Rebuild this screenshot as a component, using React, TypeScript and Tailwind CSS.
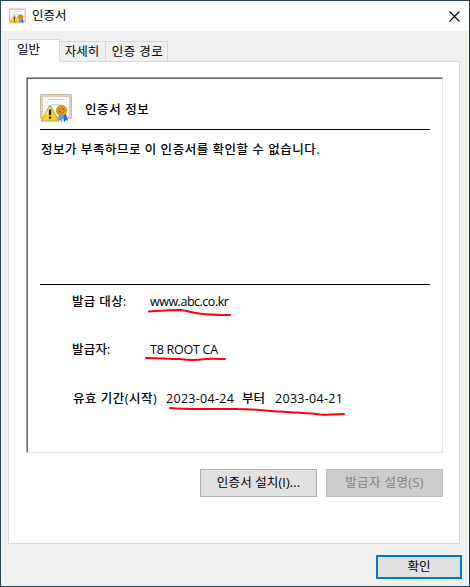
import clsx from "clsx";

const font = "font-['Open_Sans','Noto_Sans_CJK_KR',sans-serif]";

function CertificateIcon({ size }: { size: number }) {
  return (
    <svg width={size} height={size} viewBox="0 0 32 32" className="block shrink-0">
      <rect x="0.500" y="1.500" width="31" height="24" rx="1" fill="#ddd2c1" stroke="#cdc1ad" />
      <rect x="0.500" y="1.500" width="31" height="24" rx="1" fill="none" stroke="#b8ab95" strokeDasharray="1 2" />
      <rect x="3" y="4" width="26" height="19" fill="#fbfbfa" />
      <path d="M8 6.500h16" stroke="#c3c9dc" />
      <path d="M5 9.500h22M5 12.500h14" stroke="#e9ebf1" />
      <path d="M12 11.500h8" stroke="#cfd5e6" />
      <path d="M19 21l-1 7 2-1 2 2 1-6z" fill="#5b9bf5" />
      <path d="M23 21l1 8.500 2-2.500 2 1-2-7z" fill="#2463d6" />
      <circle cx="21.500" cy="17.500" r="5.200" fill="#e3a01c" stroke="#c98a17" strokeWidth="0.800" />
      <circle cx="21.500" cy="17.500" r="2.600" fill="#efb233" stroke="#a56c08" />
      <path d="M20 19l3-3" stroke="#8f5c05" />
      <path d="M10 12L1 28h18z" fill="#f5d31f" stroke="#b5a266" strokeLinejoin="round" />
      <path d="M10 13.500L5 22l5-1z" fill="#fbea80" />
      <path d="M10 16.500v5.500M10 23.500v2.200" stroke="#222" strokeWidth="2.200" />
    </svg>
  );
}

function TitleBar() {
  return (
    <div className="flex h-[30px] shrink-0 items-center bg-white pl-2">
      <CertificateIcon size={17} />
      <span className="ml-[6px] text-[12.5px] leading-[16px]">인증서</span>
      <svg width="11" height="11" viewBox="0 0 11 11" className="ml-auto mr-[9px]">
        <path d="M0.500 0.500l10 10M10.500 0.500l-10 10" stroke="#000" strokeWidth="1.100" />
      </svg>
    </div>
  );
}

function Tabs() {
  return (
    <div className="relative z-10 -mb-px flex h-[23px] items-end">
      <div className="flex h-[23px] w-[52px] justify-center border border-b-0 border-[#d9d9d9] bg-white pr-[11px] pt-[2px] leading-[16px]">
        일반
      </div>
      <div className="flex h-[21px] w-[46px] justify-center border border-l-0 border-[#d9d9d9] bg-[#f0f0f0] pr-px pt-[2px] leading-[16px]">
        자세히
      </div>
      <div className="flex h-[21px] w-[62px] justify-center border border-l-0 border-[#d9d9d9] bg-[#f0f0f0] pl-[2px] pt-[2px] leading-[16px] tracking-[0.5px]">
        인증 경로
      </div>
    </div>
  );
}

function Marker({ d, className }: { d: string; className: string }) {
  return (
    <svg width="180" height="14" viewBox="0 0 180 14" className={clsx("absolute", className)}>
      <path d={d} fill="none" stroke="#ff0008" strokeWidth="2" strokeLinecap="round" strokeLinejoin="round" />
    </svg>
  );
}

export default function App() {
  return (
    <div className={clsx("flex h-[587px] w-[470px] flex-col overflow-hidden border border-[#2c4656] bg-[#f0f0f0] text-[12.5px] text-black", font)}>
      <TitleBar />

      <div className="ml-[7px] mt-2 w-[452px]">
        <Tabs />
        <div className="h-[483px] border border-[#d9d9d9] bg-white pl-[17px] pt-[15px]">
          {/* Sunken info panel */}
          <div className="h-[376px] w-[417px] border border-b-[#e3e3e3] border-l-[#a0a0a0] border-r-[#e3e3e3] border-t-[#a0a0a0]">
            <div className="h-full border-l border-t border-[#696969] pl-[12px]">
              <div className="flex h-[51px] w-[390px] items-start border-b border-black pt-[14px]">
                <CertificateIcon size={32} />
                <span className="ml-[13px] mt-[9px] font-medium leading-[16px] tracking-[0.6px]">인증서 정보</span>
              </div>
              <div className="h-[155px] w-[390px] border-b border-black pl-[1px] pt-[12px] font-medium leading-[16px] tracking-[0.53px]">
                정보가 부족하므로 이 인증서를 확인할 수 없습니다.
              </div>

              <div className="relative mt-[9px] flex h-[48px] pl-[32px] leading-[16px]">
                <span className="w-[78px] font-medium tracking-[0.35px]">발급 대상:</span>
                <span className="tracking-[-0.48px]">www.abc.co.kr</span>
                <Marker className="left-[107px] top-[13px]" d="M2 4.500C10 4 20 3 34 3C42 4 46 6 52 6.500C64 8 74 8 83 8" />
              </div>
              <div className="relative flex h-[49px] pl-[32px] leading-[16px]">
                <span className="w-[78px] font-medium tracking-[0.2px]">발급자:</span>
                <span className="tracking-[-0.25px]">T8 ROOT CA</span>
                <Marker className="left-[104px] top-[12px]" d="M2 4C14 4 24 5 36 5C46 6.500 54 6 62 5C70 4.500 76 5 81 5" />
              </div>
              <div className="relative flex pl-[33px] leading-[16px]">
                <span className="w-[93px] font-medium tracking-[0.5px]">유효 기간(시작)</span>
                <span className="w-[76px] tracking-[0.3px]">2023-04-24</span>
                <span className="w-[33px] font-medium">부터</span>
                <span className="tracking-[0.3px]">2033-04-21</span>
                <Marker className="left-[128px] top-[12px]" d="M2 5C24 7 50 5.500 70 6C86 6 100 8 112 8.500C130 10 142 10 152 11.500C162 12.500 170 11 176 11" />
              </div>
            </div>
          </div>

          <div className="mt-4 flex gap-[9px] pl-[174px]">
            <button className="h-[28px] w-[117px] border border-[#adadad] bg-[#e1e1e1] pb-[1px] leading-[16px] tracking-[0.15px]">
              인증서 설치(I)...
            </button>
            <button disabled className="h-[28px] w-[117px] border border-[#bfbfbf] bg-[#cccccc] pb-[1px] leading-[16px] tracking-[0.4px] text-[#838383]">
              발급자 설명(S)
            </button>
          </div>
        </div>
      </div>

      <button className="ml-[375px] mt-[11px] h-[24px] w-[86px] border-2 border-[#0078d7] bg-[#e1e1e1] leading-[16px]">
        확인
      </button>
    </div>
  );
}
